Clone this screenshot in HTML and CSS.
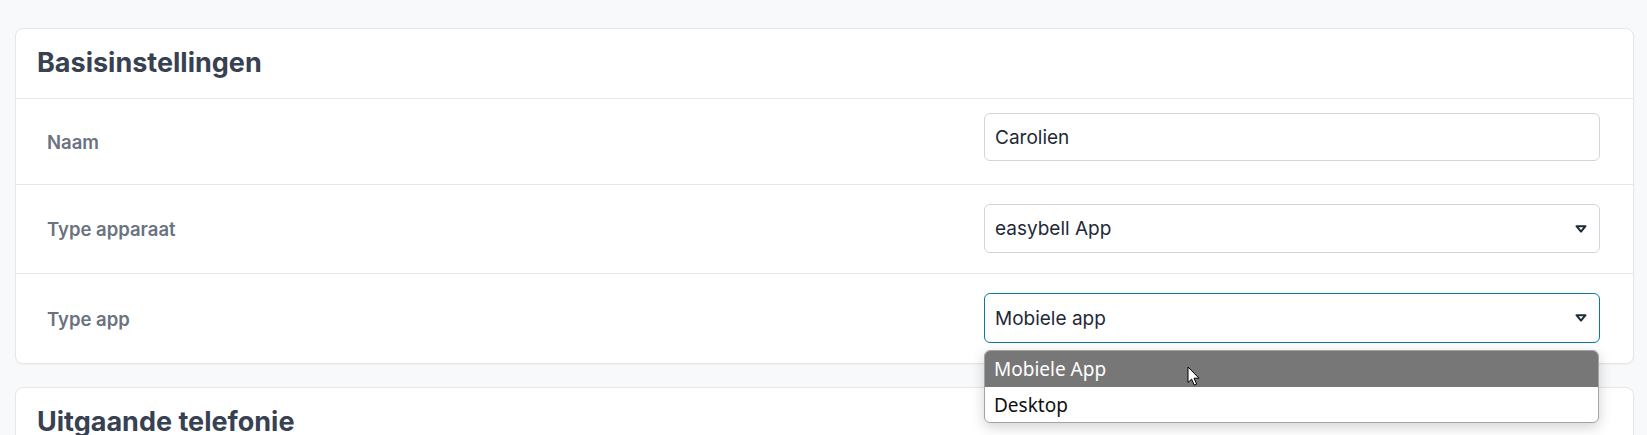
FILE: index.html
```html
<!DOCTYPE html>
<html lang="nl">
<head>
    <meta charset="UTF-8">
    <meta name="viewport" content="width=device-width, initial-scale=1.0">
    <title>Toestel bewerken</title>
    <link rel="stylesheet" href="styles.css">
</head>
<body>
    <main class="page">
        <section class="card">
            <header class="card-header">
                <h2>Basisinstellingen</h2>
            </header>

            <div class="field-row first">
                <label for="deviceName">Naam</label>
                <div class="control">
                    <input type="text" id="deviceName" value="Carolien">
                </div>
            </div>

            <div class="field-row">
                <label>Type apparaat</label>
                <div class="control">
                    <div class="select">
                        <span>easybell App</span>
                        <svg class="caret" width="12" height="8" viewBox="0 0 12 8"><path d="M1.5 1.2h9L6 6.6z" fill="none" stroke="#1f2937" stroke-width="2" stroke-linejoin="round"/></svg>
                    </div>
                </div>
            </div>

            <div class="field-row">
                <label>Type app</label>
                <div class="control">
                    <div class="select focused">
                        <span>Mobiele app</span>
                        <svg class="caret" width="12" height="8" viewBox="0 0 12 8"><path d="M1.5 1.2h9L6 6.6z" fill="none" stroke="#1f2937" stroke-width="2" stroke-linejoin="round"/></svg>
                    </div>

                    <!-- open native dropdown -->
                    <ul class="dropdown">
                        <li class="active">Mobiele App</li>
                        <li>Desktop</li>
                    </ul>
                    <svg class="cursor" width="14" height="21" viewBox="0 0 14 21"><path d="M1 1v15.5l3.6-3.4 2.6 6 2.4-1-2.6-5.9H12z" fill="#fff" stroke="#000" stroke-width="1"/></svg>
                </div>
            </div>
        </section>

        <section class="card">
            <header class="card-header">
                <h2>Uitgaande telefonie</h2>
            </header>
        </section>
    </main>
</body>
</html>
```

FILE: styles.css
```css
body {
    font-family: Inter, "Noto Sans", sans-serif;
    margin: 0;
    background-color: #f8f9fb;
    overflow: hidden;
}

.page {
    padding: 28px 13px 0 15px;
    display: flex;
    flex-direction: column;
    gap: 23px;
}

.card {
    background-color: #fff;
    border: 1px solid #e5e7eb;
    border-radius: 8px;
    box-shadow: 0 1px 2px rgba(0, 0, 0, 0.04);
}

.card-header {
    height: 69px;
    padding: 0 21px;
    display: flex;
    align-items: center;
    border-bottom: 1px solid #e5e7eb;
}

.card-header h2 {
    margin: 0;
    font-size: 27px;
    font-weight: 700;
    color: #374151;
    line-height: 1.2;
}

.field-row {
    display: grid;
    grid-template-columns: 1fr 616px;
    padding: 0 33px 0 31px;
    border-top: 1px solid #e5e7eb;
}

.field-row label {
    align-self: center;
    font-size: 18.5px;
    font-weight: 600;
    color: #6b7280;
}

.control {
    position: relative;
    padding: 19px 0 20px;
}

.field-row.first {
    border-top: none;
}

.field-row.first .control {
    padding: 14px 0 23px;
}

.control input,
.select {
    box-sizing: border-box;
    display: block;
    width: 100%;
    height: 48px;
    padding: 0 12px 0 10px;
    border: 1px solid #d1d5db;
    border-radius: 6px;
    font-family: inherit;
    font-size: 19px;
    color: #1f2937;
    background-color: #fff;
}

.select {
    height: 49px;
    display: flex;
    align-items: center;
    justify-content: space-between;
}

.select.focused {
    height: 50px;
    border-color: #0e7a99;
}

.caret {
    display: block;
}

.dropdown {
    position: absolute;
    top: 76px;
    left: 0;
    right: 1px;
    margin: 0;
    padding: 0;
    list-style: none;
    background-color: #fff;
    border: 1px solid #a3a3a3;
    border-radius: 6px;
    overflow: hidden;
    box-shadow: 0 4px 14px rgba(0, 0, 0, 0.18);
    font-family: "Noto Sans", Inter, sans-serif;
    font-size: 19px;
    color: #111;
    z-index: 5;
}

.dropdown li {
    height: 35px;
    padding: 0 9px;
    display: flex;
    align-items: center;
}

.dropdown li.active {
    height: 36px;
    background-color: #777;
    color: #fff;
}

.cursor {
    position: absolute;
    top: 92px;
    left: 203px;
    z-index: 6;
}
```
